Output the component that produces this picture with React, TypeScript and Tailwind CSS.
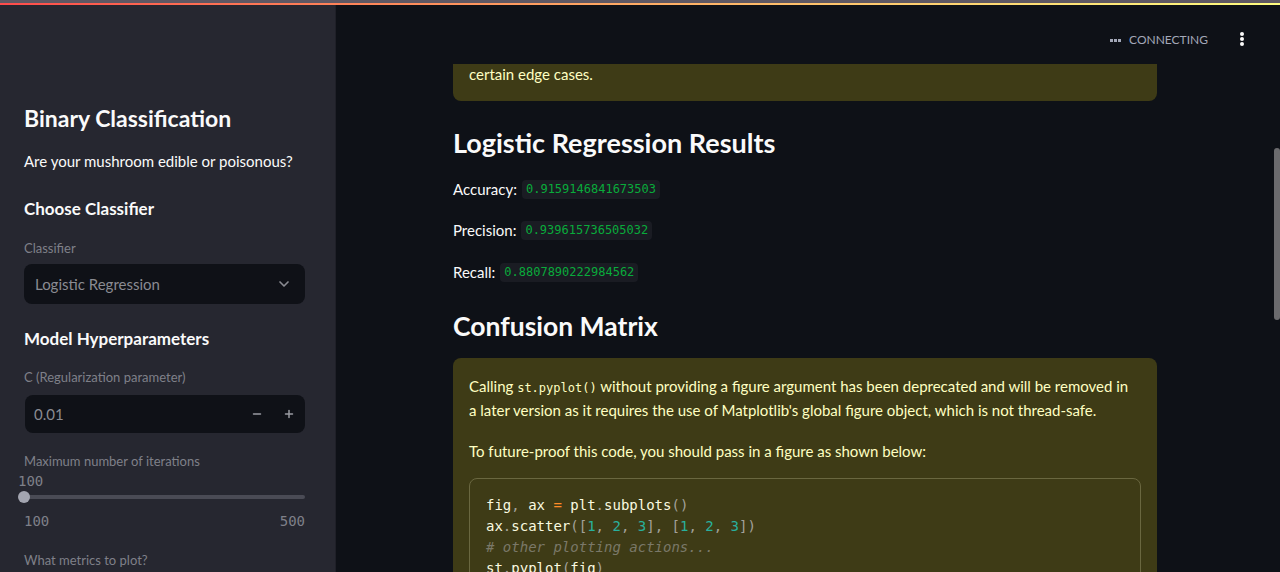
import { ChevronDown, Minus, Plus } from "lucide-react";

const sans = { fontFamily: "Lato, 'Noto Sans', sans-serif" };
const mono = { fontFamily: "'DejaVu Sans Mono', 'Liberation Mono', monospace" };

const Label = ({ children, className = "" }: { children: React.ReactNode; className?: string }) => (
  <div className={`text-[13px] leading-[20px] text-[#7f8089] ${className}`}>{children}</div>
);

const Sidebar = () => (
  <aside className="w-[336px] shrink-0 bg-[#262730] pl-6 pr-[30px] pt-[97px] border-r border-[#1f2028]">
    <h2 className="text-[23px] leading-[32px] font-bold text-[#fafafa]">Binary Classification</h2>
    <p className="mt-[15px] text-[15px] leading-[24px] text-[#fafafa]">Are your mushroom edible or poisonous?</p>
    <h3 className="mt-[22px] text-[17px] leading-[28px] font-bold text-[#fafafa]">Choose Classifier</h3>
    <Label className="mt-[15px]">Classifier</Label>
    <div className="mt-[6px] h-10 rounded-lg bg-[#0f1117] flex items-center justify-between pl-[11px] pr-[13px]">
      <span className="text-[15px] text-[#8a8b92]">Logistic Regression</span>
      <ChevronDown size={16} strokeWidth={2.5} className="text-[#8a8b92]" />
    </div>
    <h3 className="mt-[21px] text-[17px] leading-[28px] font-bold text-[#fafafa]">Model Hyperparameters</h3>
    <Label className="mt-[14px]">C (Regularization parameter)</Label>
    <div className="mt-[8px] h-[38px] rounded-lg bg-[#0f1117] flex items-center pl-[9px] ml-px">
      <span className="flex-1 text-[15px] text-[#8a8b92]">0.01</span>
      <div className="flex items-center h-full">
        <span className="w-8 h-full flex items-center justify-center text-[#9a9ba2]"><Minus size={12} strokeWidth={3} /></span>
        <span className="w-8 h-full flex items-center justify-center text-[#9a9ba2]"><Plus size={12} strokeWidth={3} /></span>
      </div>
    </div>
    <Label className="mt-[18px]">Maximum number of iterations</Label>
    <div className="text-[14px] leading-[20px] text-[#7f8089] -ml-[6px]" style={mono}>100</div>
    <div className="h-3 flex items-center relative">
      <div className="h-1 w-full rounded-full bg-[#4a4b55]" />
      <div className="absolute -left-[6px] top-0 w-3 h-3 rounded-full bg-[#a3a5b0]" />
    </div>
    <div className="mt-[8px] flex justify-between text-[14px] leading-[20px] text-[#7f8089]" style={mono}>
      <span>100</span>
      <span>500</span>
    </div>
    <Label className="mt-[19px]">What metrics to plot?</Label>
  </aside>
);

const Code = ({ children }: { children: React.ReactNode }) => (
  <code className="ml-[5px] px-[4px] h-[19px] leading-[19px] inline-block rounded bg-[#1a1c23] text-[12px] text-[#09ab3b]" style={mono}>
    {children}
  </code>
);

const Metric = ({ label, value, className = "" }: { label: string; value: string; className?: string }) => (
  <div className={`h-6 flex items-center text-[15px] ${className}`}>
    <span>{label}</span>
    <Code>{value}</Code>
  </div>
);

const P = "text-[#a3a19a]";
const N = "text-[#29b09d]";

const Main = () => (
  <main className="flex-1 flex flex-col min-w-0 bg-[#0e1117] relative">
    <header className="h-[59px] shrink-0 flex items-start justify-end pr-[36px] pt-[28px]">
      <div className="flex items-center gap-[8px] mr-[32px] h-[14px]">
        <span className="flex gap-[1px]">
          <span className="w-[3px] h-[3px] bg-[#a3a8b8]" />
          <span className="w-[3px] h-[3px] bg-[#a3a8b8]" />
          <span className="w-[3px] h-[3px] bg-[#a3a8b8]" />
        </span>
        <span className="text-[12px] leading-[14px] text-[#a3a8b8]">CONNECTING</span>
      </div>
      <div className="flex flex-col gap-[1px] mt-[-1px]">
        <span className="w-[4px] h-[4px] rounded-full bg-[#fafafa]" />
        <span className="w-[4px] h-[4px] rounded-full bg-[#fafafa]" />
        <span className="w-[4px] h-[4px] rounded-full bg-[#fafafa]" />
      </div>
    </header>
    <div className="flex-1 overflow-hidden pr-[6px]">
      <div className="w-[704px] mx-auto text-[#fafafa]">
        <div className="bg-[#3e3b16] rounded-b-lg px-4 pb-[17px]">
          <p className="text-[15px] leading-[20px] text-[#ffffc2]">certain edge cases.</p>
        </div>
        <h2 className="mt-[24px] text-[27px] leading-[36px] font-bold">Logistic Regression Results</h2>
        <Metric className="mt-[16px]" label="Accuracy:" value="0.9159146841673503" />
        <Metric className="mt-[17px]" label="Precision:" value="0.939615736505032" />
        <Metric className="mt-[18px]" label="Recall:" value="0.8807890222984562" />
        <h2 className="mt-[24px] text-[26.5px] leading-[36px] font-bold">Confusion Matrix</h2>
        <div className="mt-[14px] bg-[#3e3b16] rounded-lg p-4 text-[#ffffc2] text-[15px] leading-[24px]">
          <p className="pr-[10px]">
            Calling <code className="text-[12px] leading-none" style={mono}>st.pyplot()</code> without providing a figure argument has been deprecated and will be removed in a later version as it requires the use of Matplotlib's global figure object, which is not thread-safe.
          </p>
          <p className="mt-[17px]">To future-proof this code, you should pass in a figure as shown below:</p>
          <pre className="mt-[15px] border border-[#6a6740] rounded-lg px-4 pt-[16px] pb-4 text-[14px] leading-[21px] text-[#fafae0]" style={mono}>
            <div>fig<span className={P}>,</span> ax <span className="text-[#ff8c28]">=</span> plt<span className={P}>.</span>subplots<span className={P}>()</span></div>
            <div>ax<span className={P}>.</span>scatter<span className={P}>([</span><span className={N}>1</span><span className={P}>,</span> <span className={N}>2</span><span className={P}>,</span> <span className={N}>3</span><span className={P}>],</span> <span className={P}>[</span><span className={N}>1</span><span className={P}>,</span> <span className={N}>2</span><span className={P}>,</span> <span className={N}>3</span><span className={P}>])</span></div>
            <div className="italic text-[#7a7868]"># other plotting actions...</div>
            <div>st<span className={P}>.</span>pyplot<span className={P}>(</span>fig<span className={P}>)</span></div>
          </pre>
        </div>
      </div>
    </div>
    {/* scrollbar thumb */}
    <div className="absolute right-0 top-[143px] w-[6px] h-[172px] rounded-full bg-[#6b6b6e]" />
  </main>
);

export default function App() {
  return (
    <div className="w-[1280px] h-[572px] overflow-hidden flex flex-col bg-[#0e1117]" style={sans}>
      <div className="shrink-0">
        <div className="h-[3px] bg-[#5f5863]" />
        <div className="h-[2px] bg-gradient-to-r from-[#ff4b4b] to-[#fffd80]" />
      </div>
      <div className="flex-1 flex min-h-0">
        <Sidebar />
        <Main />
      </div>
    </div>
  );
}
